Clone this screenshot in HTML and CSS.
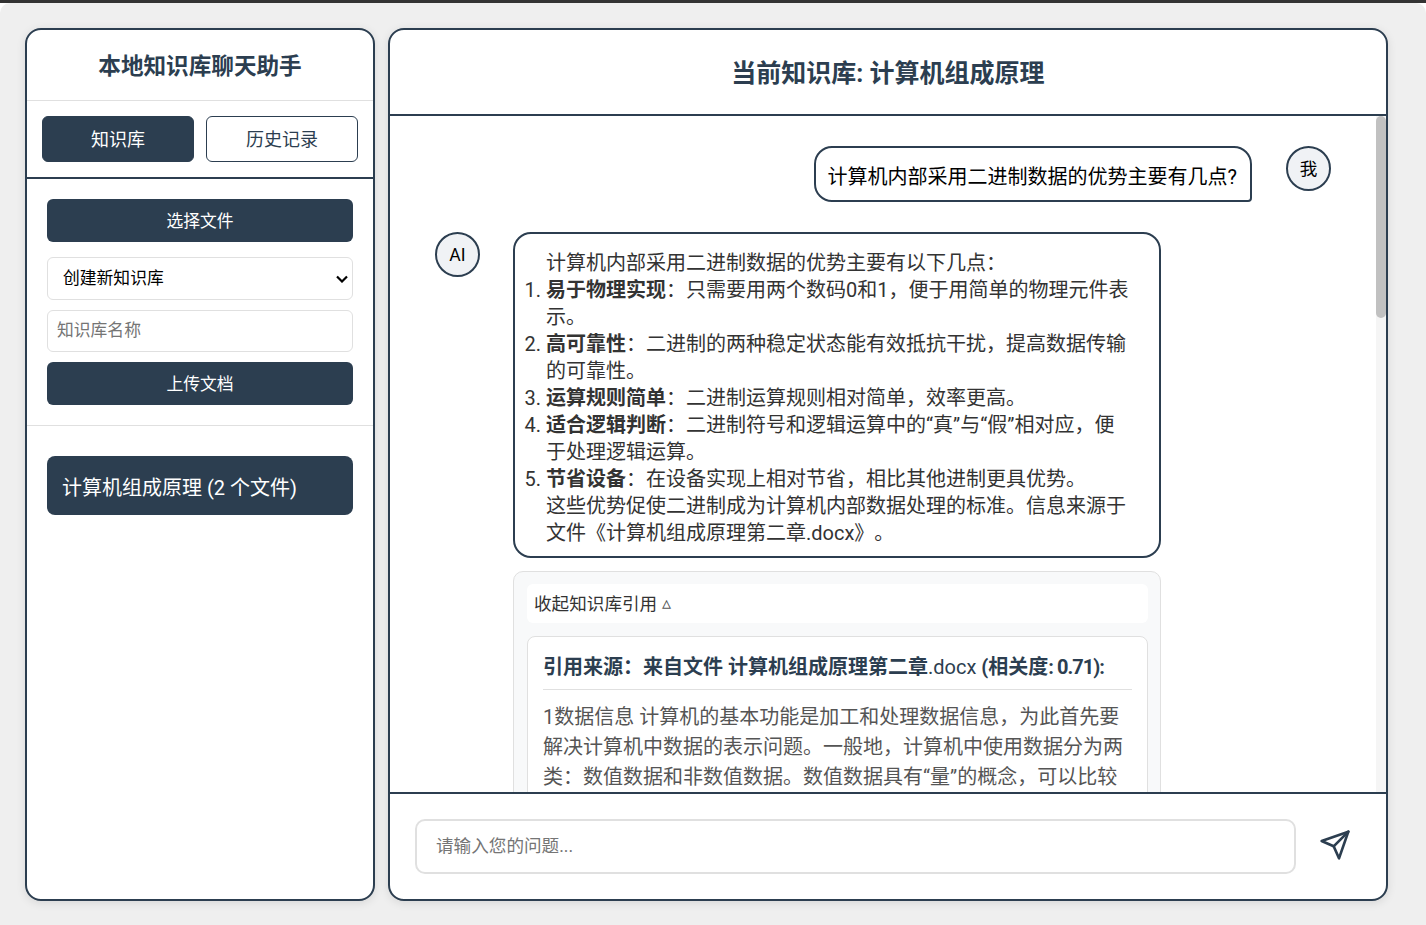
FILE: index.html
```html
<!DOCTYPE html>
<html lang="zh-CN">
<head>
<meta charset="utf-8">
<title>本地知识库聊天助手</title>
<link rel="stylesheet" href="styles.css">
</head>
<body>
<div class="top-strip"></div>
<div class="page">
  <aside class="sidebar">
    <h1 class="side-title">本地知识库聊天助手</h1>
    <div class="tabs">
      <button class="tab tab-active">知识库</button>
      <button class="tab">历史记录</button>
    </div>
    <div class="upload">
      <button class="btn">选择文件</button>
      <select class="kb-select"><option>创建新知识库</option></select>
      <input class="kb-name" type="text" placeholder="知识库名称">
      <button class="btn">上传文档</button>
    </div>
    <div class="kb-list">
      <div class="kb-item">计算机组成原理 (2 个文件)</div>
    </div>
  </aside>
  <main class="chat">
    <header class="chat-head"><h2 class="chat-title">当前知识库: 计算机组成原理</h2></header>
    <div class="messages">
      <div class="messages-inner">
        <div class="row row-user">
          <div class="bubble bubble-user">计算机内部采用二进制数据的优势主要有几点?</div>
          <div class="avatar avatar-me">我</div>
        </div>
        <div class="row row-ai">
          <div class="avatar avatar-ai">AI</div>
          <div class="ai-col">
            <div class="bubble bubble-ai">
              <p class="para">计算机内部采用二进制数据的优势主要有以下几点：</p>
              <ol class="points">
                <li><strong>易于物理实现</strong>：只需要用两个数码0和1，便于用简单的物理元件表示。</li>
                <li><strong>高可靠性</strong>：二进制的两种稳定状态能有效抵抗干扰，提高数据传输的可靠性。</li>
                <li><strong>运算规则简单</strong>：二进制运算规则相对简单，效率更高。</li>
                <li><strong>适合逻辑判断</strong>：二进制符号和逻辑运算中的“真”与“假”相对应，便于处理逻辑运算。</li>
                <li><strong>节省设备</strong>：在设备实现上相对节省，相比其他进制更具优势。</li>
              </ol>
              <p class="para">这些优势促使二进制成为计算机内部数据处理的标准。信息来源于文件《计算机组成原理第二章.docx》。</p>
            </div>
            <section class="refs">
              <div class="refs-toggle">收起知识库引用 <span class="caret">▵</span></div>
              <article class="ref-card">
                <h3 class="ref-title"><strong>引用来源：来自文件 计算机组成原理第二章</strong>.docx <strong>(相关度<span class="tight">: 0.71):</span></strong></h3>
                <p class="ref-text">1数据信息 计算机的基本功能是加工和处理数据信息，为此首先要解决计算机中数据的表示问题。一般地，计算机中使用数据分为两类：数值数据和非数值数据。数值数据具有“量”的概念，可以比较大小，非数值数据没有“量”的概念，例如字符、图形和声音等信息，它们都需要用二进制编码来表示。</p>
              </article>
            </section>
          </div>
        </div>
      </div>
      <div class="scroll-track"><div class="scroll-thumb"></div></div>
    </div>
    <footer class="composer">
      <input class="question" type="text" placeholder="请输入您的问题...">
      <button class="send" aria-label="发送">
        <svg class="send-icon" viewBox="0 0 24 24" fill="none" stroke="currentColor" stroke-width="2" stroke-linecap="round" stroke-linejoin="round"><line x1="22" y1="2" x2="11" y2="13"/><polygon points="22 2 15 22 11 13 2 9 22 2"/></svg>
      </button>
    </footer>
  </main>
</div>
</body>
</html>
```
FILE: styles.css
```css
* { box-sizing: border-box; }
html, body { margin: 0; height: 100%; overflow: hidden; background: #fff; }
body {
  font-family: Roboto, "Noto Sans CJK SC", sans-serif;
  color: #2c3e50;
  text-spacing-trim: space-all;
}
h1, h2, h3, p, ol { margin: 0; }
button, input, select { font-family: inherit; }
.top-strip { height: 3px; background: #333; }
.page {
  height: calc(100vh - 3px);
  display: flex;
  gap: 13px;
  padding: 25px 38px 24px 25px;
  background: #efefef;
  border-radius: 10px 10px 0 0;
}
.sidebar, .chat {
  background: #fff;
  border: 2px solid #2c3e50;
  border-radius: 16px;
  box-shadow: 0 2px 10px rgba(0, 0, 0, .1);
  overflow: hidden;
  display: flex;
  flex-direction: column;
}
.sidebar { width: 350px; flex: none; }
.chat { width: 1000px; flex: none; }

.side-title {
  height: 71px;
  flex: none;
  display: flex;
  align-items: center;
  justify-content: center;
  padding-bottom: 2px;
  font-size: 22.6px;
  font-weight: 700;
  border-bottom: 1px solid #e0e0e0;
}
.tabs {
  flex: none;
  display: flex;
  gap: 12px;
  padding: 15px 15px;
  border-bottom: 2px solid #2c3e50;
}
.tab {
  flex: 1;
  height: 46px;
  font-size: 18px;
  color: #2c3e50;
  background: #fff;
  border: 1px solid #2c3e50;
  border-radius: 6px;
  padding: 0 0 2px;
}
.tab-active { background: #2c3e50; color: #fff; }
.upload {
  flex: none;
  display: flex;
  flex-direction: column;
  padding: 20px 20px 20px;
  border-bottom: 1px solid #e0e0e0;
}
.btn {
  height: 43px;
  font-size: 16.8px;
  color: #fff;
  background: #2c3e50;
  border: 0;
  border-radius: 6px;
  padding: 0 0 2px;
}
.kb-select {
  height: 43px;
  margin-top: 15px;
  padding: 0 15px 2px;
  font-size: 16.8px;
  color: #000;
  appearance: none;
  background: #fff url("data:image/svg+xml,%3Csvg xmlns='http://www.w3.org/2000/svg' width='12' height='8' viewBox='0 0 12 8'%3E%3Cpath d='M1 1.5l5 5 5-5' fill='none' stroke='%23000' stroke-width='2.2'/%3E%3C/svg%3E") no-repeat right 4px center;
  border: 1px solid #e0e0e0;
  border-radius: 6px;
}
.kb-name {
  height: 42px;
  margin-top: 10px;
  margin-bottom: 10px;
  padding: 0 9px 2px;
  font-size: 16.8px;
  border: 1px solid #e0e0e0;
  border-radius: 6px;
}
.kb-list { padding: 30px 20px; }
.kb-item {
  height: 59px;
  display: flex;
  align-items: center;
  padding: 1px 15px 0;
  font-size: 20px;
  color: #fff;
  background: #2c3e50;
  border-radius: 8px;
}

.chat-head {
  height: 86px;
  flex: none;
  display: flex;
  align-items: center;
  justify-content: center;
  padding-bottom: 2px;
  border-bottom: 2px solid #2c3e50;
}
.chat-title { font-size: 25px; font-weight: 700; }
.messages {
  position: relative;
  flex: 1;
  min-height: 0;
  overflow: hidden;
}
.scroll-track {
  position: absolute;
  top: 0;
  right: 0;
  bottom: 0;
  width: 10px;
  background: #f5f5f5;
}
.scroll-thumb { height: 202px; background: #c1c1c1; border-radius: 5px; }
.messages-inner { padding: 30px 55px 30px 45px; }
.row { display: flex; align-items: flex-start; }
.row-user { justify-content: flex-end; gap: 34px; margin-bottom: 31px; }
.row-ai { gap: 33px; margin-top: -1px; }
.avatar {
  width: 45px;
  height: 45px;
  flex: none;
  display: flex;
  align-items: center;
  justify-content: center;
  font-size: 17.6px;
  color: #000;
  background: #f0f2f5;
  border: 2px solid #2c3e50;
  border-radius: 50%;
}
.avatar-me { padding-bottom: 2px; }
.avatar-ai { padding-top: 1px; }
.bubble {
  font-size: 20px;
  line-height: 27px;
  color: #333;
  background: #fff;
  border: 2px solid #2c3e50;
  border-radius: 18px;
}
.bubble-user {
  height: 56px;
  padding: 16px 13px 10px 12px;
  color: #000;
  border-radius: 18px 18px 4px 18px;
  white-space: nowrap;
}
.ai-col { width: 648px; flex: none; }
.bubble-ai { padding: 16px 27px 9px 31px; }
.points { padding-left: 0; list-style-position: outside; }
.points strong { font-weight: 700; }
.refs {
  margin-top: 13px;
  padding: 12px 12px 14px 13px;
  background: #f8f9fa;
  border: 1px solid #e0e0e0;
  border-radius: 10px;
}
.refs-toggle {
  height: 39px;
  display: flex;
  align-items: center;
  gap: 5px;
  padding: 0 7px 2px;
  font-size: 17.6px;
  color: #333;
  background: #fff;
  border-radius: 6px;
}
.caret { font-size: 18px; color: #555; }
.ref-card {
  margin-top: 13px;
  padding: 15px;
  background: #fff;
  border: 1px solid #e0e0e0;
  border-radius: 8px;
}
.ref-title {
  padding-bottom: 7px;
  font-size: 20px;
  line-height: 30px;
  font-weight: 400;
  color: #2c3e50;
  border-bottom: 1px solid #e0e0e0;
  white-space: nowrap;
}
.tight { letter-spacing: -1px; }
.ref-text {
  margin-top: 12px;
  font-size: 20px;
  line-height: 30px;
  color: #555;
}

.composer {
  height: 107px;
  flex: none;
  display: flex;
  align-items: center;
  gap: 22px;
  padding: 0 34px 0 25px;
  border-top: 2px solid #2c3e50;
}
.question {
  width: 881px;
  height: 55px;
  flex: none;
  padding: 0 19px 2px;
  font-size: 17.6px;
  border: 2px solid #e0e0e0;
  border-radius: 10px;
}
.send {
  width: 34px;
  height: 34px;
  flex: none;
  margin-bottom: 3px;
  padding: 1px;
  background: none;
  border: 0;
  color: #2c3e50;
}
.send-icon { display: block; width: 32px; height: 32px; }
```
